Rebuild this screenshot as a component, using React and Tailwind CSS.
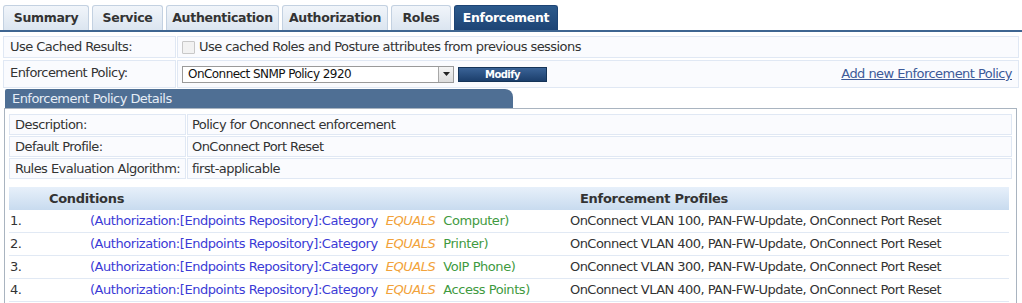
import React from 'react';

const tabs = [
    { name: 'Summary', w: 'w-[86px]' },
    { name: 'Service', w: 'w-[71px]' },
    { name: 'Authentication', w: 'w-[113px]' },
    { name: 'Authorization', w: 'w-[106px]' },
    { name: 'Roles', w: 'w-[60px]' },
    { name: 'Enforcement', w: 'w-[104px]', active: true },
];

const details = [
    ['Description:', 'Policy for Onconnect enforcement'],
    ['Default Profile:', 'OnConnect Port Reset'],
    ['Rules Evaluation Algorithm:', 'first-applicable'],
];

const rules = [
    { value: 'Computer', vlan: '100' },
    { value: 'Printer', vlan: '400' },
    { value: 'VoIP Phone', vlan: '300' },
    { value: 'Access Points', vlan: '400' },
];

const App = () => {
    return (
        <div className="w-[1022px] h-[303px] overflow-hidden bg-white text-[12px] tracking-[-0.55px] whitespace-nowrap text-[#333] font-['DejaVu_Sans',sans-serif]">
            {/* Tabs */}
            <div className="flex items-end gap-[3px] pl-[3px] pt-[5px] border-b-2 border-[#3e6591]">
                {tabs.map((t) => (
                    <div
                        key={t.name}
                        className={`${t.w} h-[25px] flex items-center justify-center rounded-t-[3px] border border-b-0 font-bold text-[12.5px] tracking-[-0.3px] ${
                            t.active
                                ? 'bg-gradient-to-b from-[#2c5a8c] to-[#1d4475] border-[#1d4475] text-white'
                                : 'bg-gradient-to-b from-[#f1f5fa] to-[#dbe5f0] border-[#c3d1e1] text-[#333]'
                        }`}
                    >
                        {t.name}
                    </div>
                ))}
            </div>

            {/* Form rows */}
            <div className="mx-[3px] mt-[4px] flex flex-col gap-[2px]">
                <div className="flex gap-[1px] h-[22px]">
                    <div className="w-[173px] pl-[6px] flex items-center bg-[#fafbfe] border border-[#e0e8f4] text-[13px]">Use Cached Results:</div>
                    <div className="flex-1 pl-[4px] flex items-center gap-[4px] bg-[#fafbfe] border border-[#e0e8f4] text-[13px]">
                        <span className="w-[13px] h-[13px] border border-[#c8c8c8] bg-[#f2f2f2] rounded-[1px]" />
                        <span>Use cached Roles and Posture attributes from previous sessions</span>
                    </div>
                </div>
                <div className="flex gap-[1px] h-[28px]">
                    <div className="w-[173px] pl-[6px] pt-[2px] bg-[#fafbfe] border border-[#e0e8f4] text-[13px]">Enforcement Policy:</div>
                    <div className="flex-1 pl-[4px] pr-[6px] flex items-center bg-[#fafbfe] border border-[#e0e8f4]">
                        <div className="w-[272px] h-[17px] flex items-center justify-between border border-[#9a9a9a] bg-white pl-[5px]">
                            <span className="text-[12px] text-[#111]">OnConnect SNMP Policy 2920</span>
                            <span className="w-[15px] h-[15px] flex items-center justify-center bg-gradient-to-b from-[#f4f4f4] to-[#dcdcdc] border-l border-[#a8a8a8]">
                                <svg width="7" height="4" viewBox="0 0 7 4"><path d="M0 0h7L3.5 4z" fill="#222" /></svg>
                            </span>
                        </div>
                        <button className="ml-[4px] w-[89px] h-[15px] flex items-center justify-center bg-gradient-to-b from-[#3a6397] to-[#1c3f6c] text-white text-[10px] font-bold border border-[#153458]">
                            Modify
                        </button>
                        <a className="ml-auto text-[13px] text-[#3d5a99] underline">Add new Enforcement Policy</a>
                    </div>
                </div>
            </div>

            {/* Details panel */}
            <div className="ml-[4px] mr-[5px] mt-[1px]">
                <div className="w-[508px] h-[19px] ml-[1px] pl-[7px] flex items-center rounded-tr-[8px] rounded-tl-[2px] bg-[#4f6f94] text-[#e6edf6] text-[13px]">
                    Enforcement Policy Details
                </div>
                <div className="border-l border-r border-t border-[#a9b4c0] px-[4px] pt-[5px] h-[200px]">
                    <div className="flex flex-col gap-[1px]">
                        {details.map(([k, v]) => (
                            <div key={k} className="flex gap-[1px] h-[21px]">
                                <div className="w-[177px] pl-[5px] flex items-center bg-[#fafbfe] border border-[#e0e8f4] text-[13px]">{k}</div>
                                <div className="flex-1 pl-[4px] flex items-center bg-[#fafbfe] border border-[#e0e8f4] text-[13px]">{v}</div>
                            </div>
                        ))}
                    </div>

                    {/* Rules table */}
                    <div className="mt-[8px] pr-[3px]">
                        <div className="h-[23px] flex items-center font-bold text-[13px] tracking-[-0.3px] bg-gradient-to-b from-[#e7f0fa] to-[#c8dbef]">
                            <span className="w-[566px] pl-[40px]">Conditions</span>
                            <span className="pl-[5px]">Enforcement Profiles</span>
                        </div>
                        {rules.map((r, i) => (
                            <div key={i} className="h-[23px] flex items-center border-b border-[#e1e9f4] text-[13px]">
                                <span className="w-[81px] pl-[1px]">{i + 1}.</span>
                                <span className="w-[480px] text-[#3b3bd6] tracking-[-0.45px]">
                                    (Authorization:[Endpoints Repository]:Category
                                    <span className="italic text-[#f2a23a] ml-[8px] mr-[8px]">EQUALS</span>
                                    <span className="text-[#3f9a3f]">{r.value})</span>
                                </span>
                                <span>OnConnect VLAN {r.vlan}, PAN-FW-Update, OnConnect Port Reset</span>
                            </div>
                        ))}
                    </div>
                </div>
            </div>
        </div>
    );
};

export default App;
